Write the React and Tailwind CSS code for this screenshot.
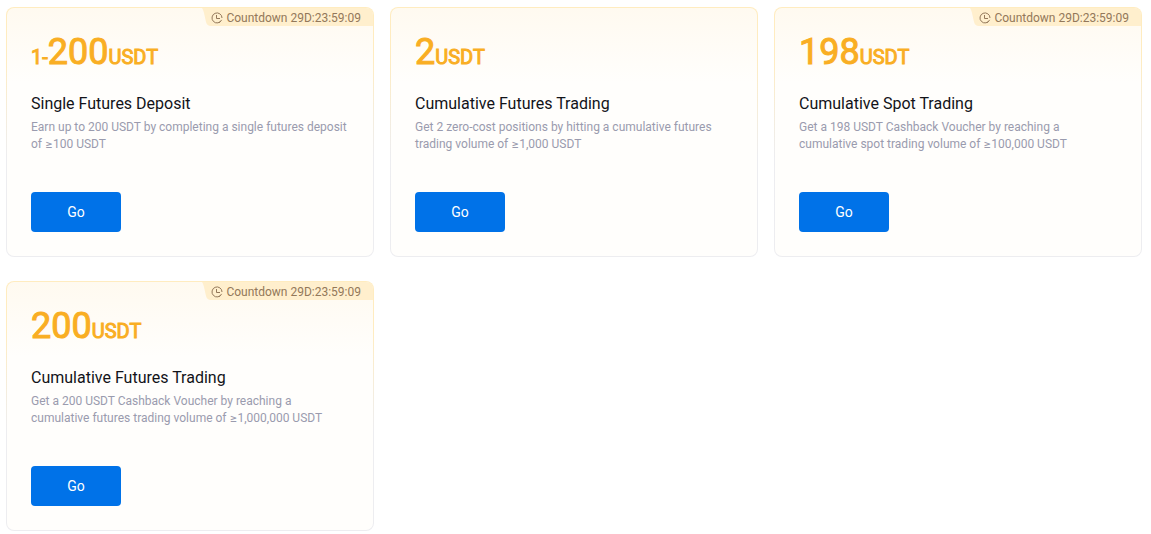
const cards = [
  { prefix: "1-", amount: "200", title: "Single Futures Deposit", text: "Earn up to 200 USDT by completing a single futures deposit of", minimum: "100 USDT", countdown: "29D:23:59:09" },
  { amount: "2", title: "Cumulative Futures Trading", text: "Get 2 zero-cost positions by hitting a cumulative futures trading volume of", minimum: "1,000 USDT" },
  { amount: "198", title: "Cumulative Spot Trading", text: "Get a 198 USDT Cashback Voucher by reaching a cumulative spot trading volume of", minimum: "100,000 USDT", countdown: "29D:23:59:09" },
  { amount: "200", title: "Cumulative Futures Trading", text: "Get a 200 USDT Cashback Voucher by reaching a cumulative futures trading volume of", minimum: "1,000,000 USDT", countdown: "29D:23:59:09" },
];

function ClockIcon() {
  return (
    <svg viewBox="0 0 12 12" className="size-3" fill="none" stroke="currentColor" aria-hidden="true">
      <path d="M10.6 7.9A5 5 0 1 1 11 6M9.4 9.6A5 5 0 0 1 8 10.6" />
      <path d="M5.5 3v3.5H9" />
    </svg>
  );
}

function Countdown({ value }) {
  return (
    <div className="absolute top-0 right-0 h-[18px] w-[171px] text-[#93785a]">
      <svg viewBox="0 0 171 18" className="absolute inset-0 size-full" aria-hidden="true">
        <path d="M0 0H164Q171 0 171 7V18H9Q5 18 4 14L2 5Q1 1 0 0Z" fill="#ffefcd" />
      </svg>
      <div className="relative flex h-full items-center justify-end gap-[3px] pt-0.5 pr-3 text-xs whitespace-nowrap">
        <ClockIcon />
        <span>Countdown {value}</span>
      </div>
    </div>
  );
}

function RewardCard({ prefix, amount, title, text, minimum, countdown }) {
  return (
    <article className="rounded-lg bg-linear-to-b from-[#ffecc0] from-20% to-[#ededf0] to-60% p-px">
      <div className="relative flex h-[248px] flex-col items-start rounded-[7px] bg-linear-to-b from-[#fffaf0] to-[#fffefc] to-30% px-6 pt-6">
        {countdown && <Countdown value={countdown} />}
        <p className="text-xl leading-10 text-[#f9ae23] [-webkit-text-stroke:1px_#f9ae23]">
          {prefix}<span className="text-4xl leading-10">{amount}</span>USDT
        </p>
        <h2 className="mt-[15px] text-base leading-6 text-[#121319]">{title}</h2>
        <p className="mt-[3px] text-xs leading-[17px] text-[#9a9bae]">
          {text} <span className="font-[Inter,sans-serif] leading-none">≥</span>{minimum}
        </p>
        <button type="button" className="mt-auto mb-6 h-10 w-[90px] rounded bg-[#0072e8] text-sm text-white">Go</button>
      </div>
    </article>
  );
}

export default function App() {
  return (
    <main className="grid grid-cols-3 gap-x-4 gap-y-6 bg-white pt-[7px] pr-[9px] pb-1 pl-1.5 font-[Roboto,sans-serif]">
      {cards.map((card, i) => <RewardCard key={i} {...card} />)}
    </main>
  );
}
